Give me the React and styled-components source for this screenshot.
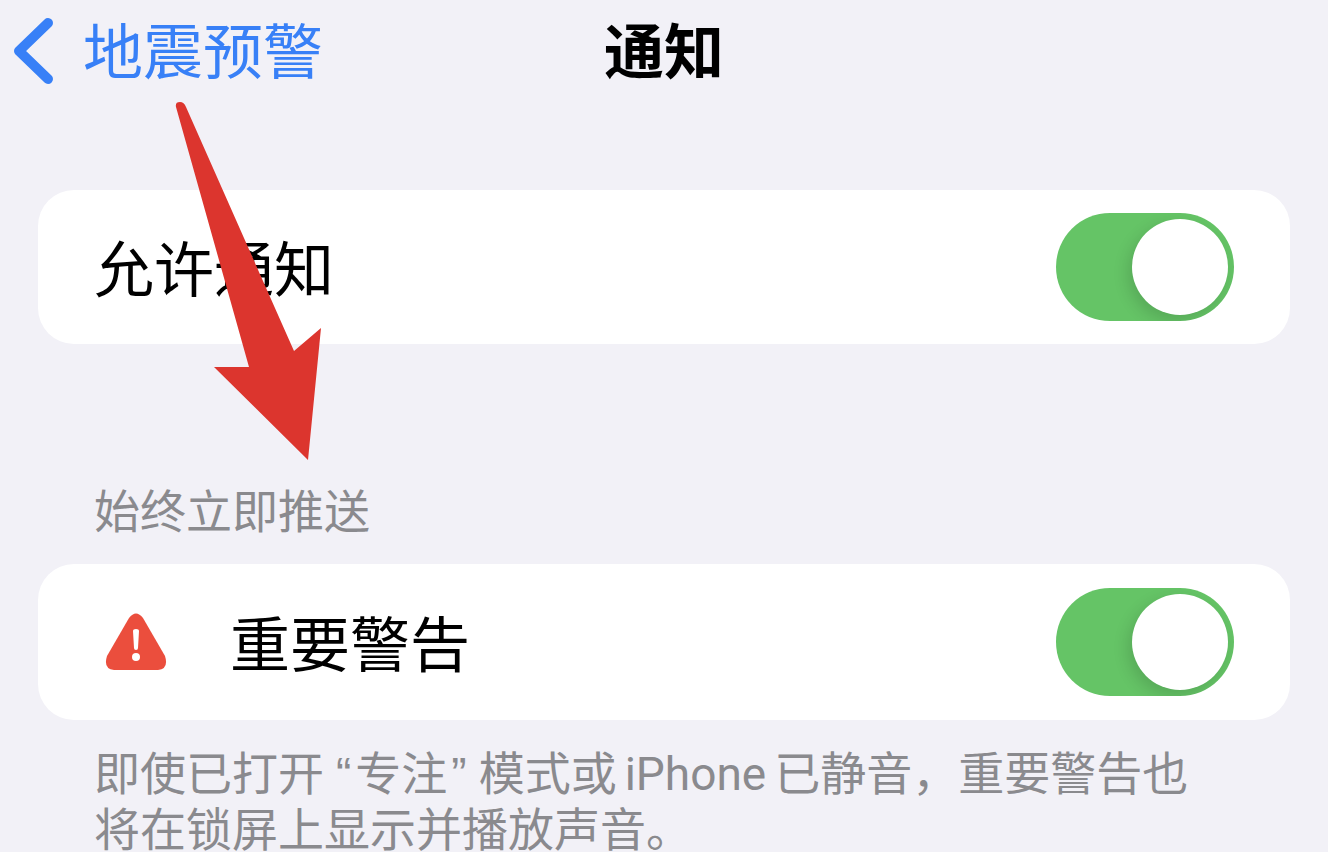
import React, { useState } from 'react';
import styled, { createGlobalStyle } from 'styled-components';

const GlobalStyle = createGlobalStyle`
  * { box-sizing: border-box; }
  body {
    margin: 0;
    background: #f2f1f7;
    color: #000;
    font-family: Roboto, "Noto Sans CJK SC", sans-serif;
  }
`;

const Screen = styled.main`
  position: relative;
  padding: 0 38px;
`;

const NavBar = styled.header`
  display: grid;
  grid-template-columns: 1fr auto 1fr;
  align-items: center;
  height: 104px;
  margin: 0 -26px;
  font-size: 60px;
  line-height: 100px;
`;

const BackLink = styled.a`
  display: flex;
  align-items: center;
  gap: 28px;
  color: #3880f7;
  text-decoration: none;
`;

const BackText = styled.span`
  padding-top: 4px;
`;

const Title = styled.h1`
  margin: 0;
  padding-top: 4px;
  font-size: 60px;
  font-weight: 700;
`;

const Group = styled.section`
  padding-top: ${(p) => p.$space}px;
`;

const GroupTitle = styled.h2`
  margin: 0;
  padding: 0 56px 24px;
  color: #8a8a8e;
  font-size: 46px;
  line-height: 56px;
  font-weight: 400;
`;

const Card = styled.label`
  display: flex;
  align-items: center;
  height: ${(p) => p.$height}px;
  padding: 0 56px;
  border-radius: 36px;
  background: #fff;
  font-size: 60px;
`;

const CardText = styled.span`
  flex: 1;
  padding-top: 10px;
  line-height: 80px;
`;

const IconSlot = styled.span`
  display: flex;
  width: 136px;
  padding-left: 10px;
`;

const Switch = styled.input`
  appearance: none;
  display: flex;
  align-items: center;
  width: 178px;
  height: 108px;
  margin: 0;
  padding: 0 6px;
  border-radius: 54px;
  background: #d9d9de;
  overflow: hidden;
  cursor: pointer;

  &::before {
    content: "";
    width: 96px;
    height: 96px;
    border-radius: 50%;
    background: #fff;
    box-shadow: -4px 6px 16px rgba(0, 0, 0, 0.14);
  }

  &:checked {
    justify-content: flex-end;
    background: #65c466;
  }
`;

const Note = styled.p`
  margin: 0;
  padding: 26px 80px 0 56px;
  color: #8a8a8e;
  font-size: 46px;
  line-height: 56px;
`;

const QuoteMark = styled.span`
  padding: ${(p) => (p.$closing ? '0 12px 0 4px' : '0 4px 0 12px')};
  font-family: "Liberation Sans", sans-serif;
  line-height: 1;
`;

const Latin = styled.span`
  padding: 0 8px;
`;

const Arrow = styled.svg`
  position: absolute;
  top: 96px;
  left: 170px;
  pointer-events: none;
`;

function SettingSwitch({ label, height, icon }) {
  const [on, setOn] = useState(true);
  return (
    <Card $height={height}>
      {icon && <IconSlot>{icon}</IconSlot>}
      <CardText>{label}</CardText>
      <Switch type="checkbox" role="switch" checked={on} onChange={(e) => setOn(e.target.checked)} />
    </Card>
  );
}

const ChevronIcon = () => (
  <svg width="43" height="68" viewBox="0 0 43 68" fill="none" aria-hidden="true">
    <path d="M36 5 7 33l29 28" stroke="#3880f7" strokeWidth="10" strokeLinecap="round" strokeLinejoin="round" />
  </svg>
);

const WarningIcon = () => (
  <svg width="64" height="58" viewBox="0 0 64 58" aria-hidden="true">
    <path d="M25 5Q32-4 39 5L61 43Q65 56 54 57H10Q-1 56 3 43Z" fill="#eb4e3d" />
    <path d="M29 18Q29 16 32 16T35 18L34 35Q34 37 32 37T30 35Z" fill="#fff" />
    <circle cx="32" cy="44" r="4" fill="#fff" />
  </svg>
);

export default function App() {
  return (
    <>
      <GlobalStyle />
      <Screen>
        <NavBar>
          <BackLink href="#back"><ChevronIcon /><BackText>地震预警</BackText></BackLink>
          <Title>通知</Title>
        </NavBar>
        <Group $space={86}>
          <SettingSwitch label="允许通知" height={154} />
        </Group>
        <Group $space={140}>
          <GroupTitle>始终立即推送</GroupTitle>
          <SettingSwitch label="重要警告" height={156} icon={<WarningIcon />} />
          <Note>
            即使已打开<QuoteMark>“</QuoteMark>专注<QuoteMark $closing>”</QuoteMark>模式或<Latin>iPhone</Latin>已静音，重要警告也将在锁屏上显示并播放声音。
          </Note>
        </Group>
        <Arrow width="160" height="370" viewBox="170 96 160 370" aria-hidden="true">
          <path d="M176 107Q175 102 180 102Q184 102 186 107L294 351 321 328 308 460 214 367 249 367Z" fill="#dc352e" />
        </Arrow>
      </Screen>
    </>
  );
}
